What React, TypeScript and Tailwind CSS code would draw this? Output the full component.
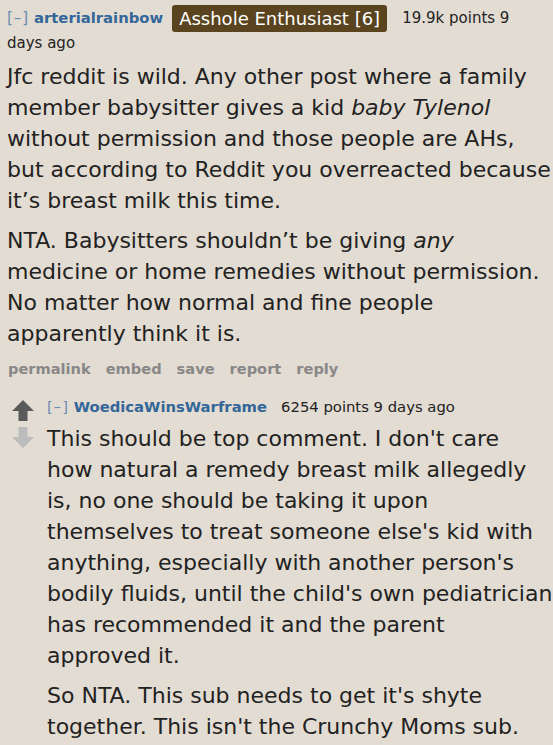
const font = { fontFamily: '"DejaVu Sans", Verdana, sans-serif' }

const Arrow = ({ up, color }: { up: boolean; color: string }) => (
    <svg width="22" height="21" viewBox="0 0 22 21" className={up ? "" : "rotate-180"}>
        <path d="M11 0 L22 11 L15.5 11 L15.5 21 L6.5 21 L6.5 11 L0 11 Z" fill={color} />
    </svg>
)

const Actions = () => (
    <div className="flex gap-[15px] px-[8px] text-[14.6px] leading-[20px] font-bold text-[#888888] mt-[10px]">
        <span>permalink</span>
        <span>embed</span>
        <span>save</span>
        <span>report</span>
        <span>reply</span>
    </div>
)

export default function App() {
    return (
        <div className="w-[553px] h-[745px] overflow-hidden bg-[#e3dcd2] text-[#222222]" style={font}>
            <div className="pl-[7px] pt-[5px]">
                <div className="text-[15px] leading-[25px] pr-[7px]">
                    <span className="tracking-[1px] text-[#6b8cb5]">[–]</span>{" "}
                    <span className="font-bold text-[14.8px] text-[#336699]">arterialrainbow</span>
                    <span className="inline-block align-middle bg-[#5a4420] text-white text-[18px] leading-[27px] -my-[1px] px-[7px] rounded-[3px] ml-[9px] mr-[15px]">Asshole Enthusiast [6]</span>
                    <span>19.9k points 9 days ago</span>
                </div>
                <div className="text-[22px] leading-[31px] mt-[5px] whitespace-nowrap">
                    <p>
                        Jfc reddit is wild. Any other post where a family<br />
                        member babysitter gives a kid <em>baby Tylenol</em><br />
                        without permission and those people are AHs,<br />
                        but according to Reddit you overreacted because<br />
                        it’s breast milk this time.
                    </p>
                    <p className="mt-[9px]">
                        NTA. Babysitters shouldn’t be giving <em>any</em><br />
                        medicine or home remedies without permission.<br />
                        No matter how normal and fine people<br />
                        apparently think it is.
                    </p>
                </div>
            </div>
            <Actions />
            <div className="flex mt-[17px] pl-[12px]">
                <div className="flex flex-col gap-[6px] pt-[4px] w-[35px] shrink-0">
                    <Arrow up color="#5a5a5a" />
                    <Arrow up={false} color="#bcbcbc" />
                </div>
                <div>
                    <div className="text-[14.8px] leading-[22px]">
                        <span className="tracking-[1px] text-[#6b8cb5]">[–]</span>{" "}
                        <span className="font-bold text-[#336699]">WoedicaWinsWarframe</span>
                        <span className="ml-[14px]">6254 points 9 days ago</span>
                    </div>
                    <div className="text-[22px] leading-[31px] mt-[5px] whitespace-nowrap">
                        <p>
                            This should be top comment. I don't care<br />
                            how natural a remedy breast milk allegedly<br />
                            is, no one should be taking it upon<br />
                            themselves to treat someone else's kid with<br />
                            anything, especially with another person's<br />
                            bodily fluids, until the child's own pediatrician<br />
                            has recommended it and the parent<br />
                            approved it.
                        </p>
                        <p className="mt-[9px]">
                            So NTA. This sub needs to get it's shyte<br />
                            together. This isn't the Crunchy Moms sub.
                        </p>
                    </div>
                </div>
            </div>
        </div>
    )
}
